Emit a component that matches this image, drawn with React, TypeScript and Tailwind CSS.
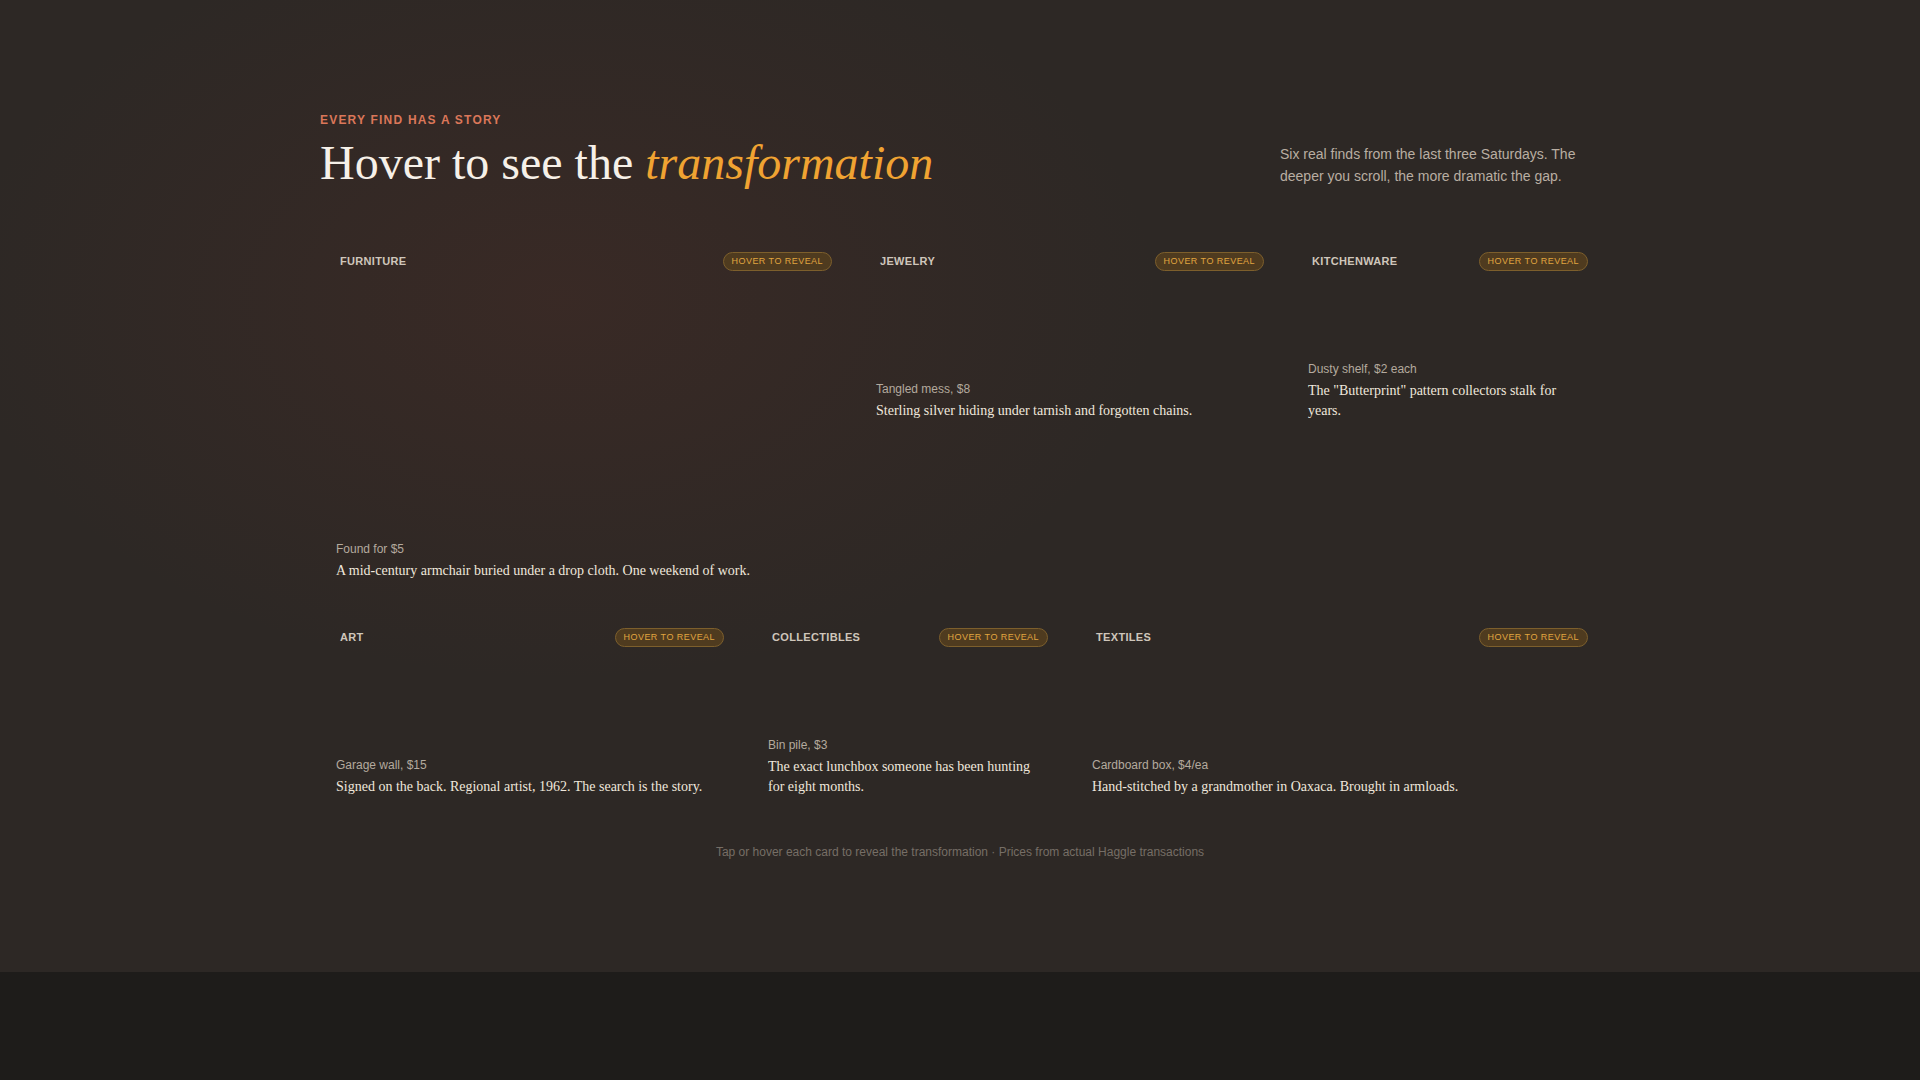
import React from 'react';

type Find = {
  category: string;
  price: string;
  story: string;
  span: string;
  height: string;
};

const topRow: Find[] = [
  {
    category: 'Furniture',
    price: 'Found for $5',
    story: 'A mid-century armchair buried under a drop cloth. One weekend of work.',
    span: 'col-span-5',
    height: 'h-[364px]',
  },
  {
    category: 'Jewelry',
    price: 'Tangled mess, $8',
    story: 'Sterling silver hiding under tarnish and forgotten chains.',
    span: 'col-span-4',
    height: 'h-[204px]',
  },
  {
    category: 'Kitchenware',
    price: 'Dusty shelf, $2 each',
    story: 'The "Butterprint" pattern collectors stalk for years.',
    span: 'col-span-3',
    height: 'h-[204px]',
  },
];

const bottomRow: Find[] = [
  {
    category: 'Art',
    price: 'Garage wall, $15',
    story: 'Signed on the back. Regional artist, 1962. The search is the story.',
    span: 'col-span-4',
    height: 'h-[204px]',
  },
  {
    category: 'Collectibles',
    price: 'Bin pile, $3',
    story: 'The exact lunchbox someone has been hunting for eight months.',
    span: 'col-span-3',
    height: 'h-[204px]',
  },
  {
    category: 'Textiles',
    price: 'Cardboard box, $4/ea',
    story: 'Hand-stitched by a grandmother in Oaxaca. Brought in armloads.',
    span: 'col-span-5',
    height: 'h-[204px]',
  },
];

const FindCard: React.FC<{ find: Find }> = ({ find }) => (
  <div className={`${find.span} ${find.height} flex flex-col justify-between rounded-xl px-4 pt-[15px] pb-5`}>
    <div className="-mr-1 flex items-center justify-between">
      <span className="pl-1 text-[11px] font-bold uppercase leading-[19px] tracking-[0.03em] text-[#cfc6bb]">
        {find.category}
      </span>
      <span className="rounded-full border border-[#7d5f2c] bg-[#4f3b1f] px-2 py-[3px] text-[9px] font-medium uppercase leading-[11px] tracking-[0.05em] text-[#e0a53f]">
        Hover to reveal
      </span>
    </div>
    <div>
      <p className="mb-1 text-[12px] leading-4 text-[#b4aa9e]">{find.price}</p>
      <p className="font-['Liberation_Serif',serif] text-[14px] leading-5 text-[#efe7dc]">{find.story}</p>
    </div>
  </div>
);

const App: React.FC = () => {
  return (
    <div className="min-h-screen bg-[#1e1c1a] font-['Liberation_Sans',Arial,sans-serif]">
      <section className="bg-[#2d2825] bg-[radial-gradient(ellipse_600px_380px_at_560px_300px,rgba(105,48,38,0.2),transparent)] px-8 pt-28 pb-28">
        <div className="mx-auto max-w-7xl">
          <div className="mb-[47px] flex items-end justify-between">
            <div>
              <p className="mb-[9px] text-[12px] font-bold uppercase leading-4 tracking-[0.1em] text-[#db7759]">
                Every find has a story
              </p>
              <h1 className="font-['Liberation_Serif',serif] text-[48px] leading-[1.1] text-[#f6f0e8]">
                Hover to see the <em className="italic text-[#f0a332]">transformation</em>
              </h1>
            </div>
            <p className="mb-[3px] max-w-xs text-[14px] leading-[22px] text-[#b9aea2]">
              Six real finds from the last three Saturdays. The deeper you scroll, the more dramatic the gap.
            </p>
          </div>

          <div className="grid grid-cols-12 items-start gap-x-4 gap-y-3">
            {topRow.map((f) => (
              <FindCard key={f.category} find={f} />
            ))}
            {bottomRow.map((f) => (
              <FindCard key={f.category} find={f} />
            ))}
          </div>

          <p className="mt-[27px] text-center text-[12px] leading-4 text-[#766e66]">
            Tap or hover each card to reveal the transformation · Prices from actual Haggle transactions
          </p>
        </div>
      </section>
    </div>
  );
};

export default App;
